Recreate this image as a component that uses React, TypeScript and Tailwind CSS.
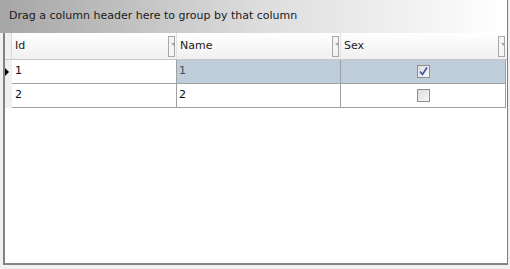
import React from 'react';

interface Row {
  id: number;
  name: string;
  sex: boolean;
}

const rows: Row[] = [
  { id: 1, name: '1', sex: true },
  { id: 2, name: '2', sex: false },
];

const font = { fontFamily: 'Tahoma, "DejaVu Sans", sans-serif' };

const FilterButton: React.FC = () => (
  <div className="relative h-[21px] w-[7px] border border-[#a8a8a8] bg-[#f4f4f4]">
    <svg className="absolute left-[1px] top-[6px]" width="5" height="4" viewBox="0 0 5 4">
      <path d="M1 0h4v4z" fill="#a0a0a0" />
    </svg>
  </div>
);

const HeaderCell: React.FC<{ label: string; width: string; last?: boolean }> = ({ label, width, last }) => (
  <div
    className={`flex h-full items-center justify-between pl-[3px] pr-[1px] ${width} ${
      last ? '' : 'border-r border-[#e2e2e2]'
    }`}
  >
    <span className="text-[11px] text-[#1a1a1a]">{label}</span>
    <FilterButton />
  </div>
);

const CheckBox: React.FC<{ checked: boolean }> = ({ checked }) => (
  <div className="flex h-[13px] w-[13px] items-center justify-center border border-[#8e8f8f] bg-gradient-to-br from-[#dcdcdc] to-[#f8f8f8]">
    {checked && (
      <svg width="9" height="9" viewBox="0 0 9 9">
        <path d="M1 4.5 L3.5 7.5 L8 0.5" fill="none" stroke="#3c4fa5" strokeWidth="1.6" />
      </svg>
    )}
  </div>
);

export default function App() {
  return (
    <div className="h-[269px] w-[510px] overflow-hidden bg-[#f0f0f0]" style={font}>
      <div className="w-[508px] border-r border-[#7c7c84]">
        <div className="flex h-[33px] items-center bg-gradient-to-r from-[#a6a6a6] via-[#dcdcdc] to-white pl-[9px] text-[11px] text-[#1a1a1a]">
          Drag a column header here to group by that column
        </div>
        <div className="ml-[3px] flex h-[232px] flex-col border-b-2 border-l-2 border-[#82828a] bg-white">
          <div className="flex h-[27px] border-b border-[#c8c8c8] bg-gradient-to-b from-white to-[#f0f0f0]">
            <div className="w-[7px] border-r border-[#d8d8d8] bg-[#f0f0f0]" />
            <HeaderCell label="Id" width="w-[165px]" />
            <HeaderCell label="Name" width="w-[164px]" />
            <HeaderCell label="Sex" width="w-[165px]" last />
          </div>
          {rows.map((row, i) => {
            const selected = i === 0;
            return (
              <div key={row.id} className="flex h-[24px]">
                <div className="flex w-[7px] items-center bg-[#f0f0f0]">
                  {selected && (
                    <svg width="5" height="8" viewBox="0 0 5 8">
                      <path d="M0 0L4 4L0 8z" fill="#000" />
                    </svg>
                  )}
                </div>
                <div className="flex w-[165px] items-center border-b border-r border-[#a0a0a0] pl-[3px] text-[11px] text-[#0a0a0a]">
                  {row.id}
                </div>
                <div
                  className={`flex w-[164px] items-center border-b border-r border-[#a0a0a0] pl-[2px] text-[11px] ${
                    selected ? 'bg-[#bfcddb] text-[#3f4f5c]' : 'text-[#0a0a0a]'
                  }`}
                >
                  {row.name}
                </div>
                <div
                  className={`flex w-[165px] items-center justify-center border-b border-r border-[#a0a0a0] ${
                    selected ? 'bg-[#bfcddb]' : ''
                  }`}
                >
                  <CheckBox checked={row.sex} />
                </div>
              </div>
            );
          })}
        </div>
      </div>
    </div>
  );
}
